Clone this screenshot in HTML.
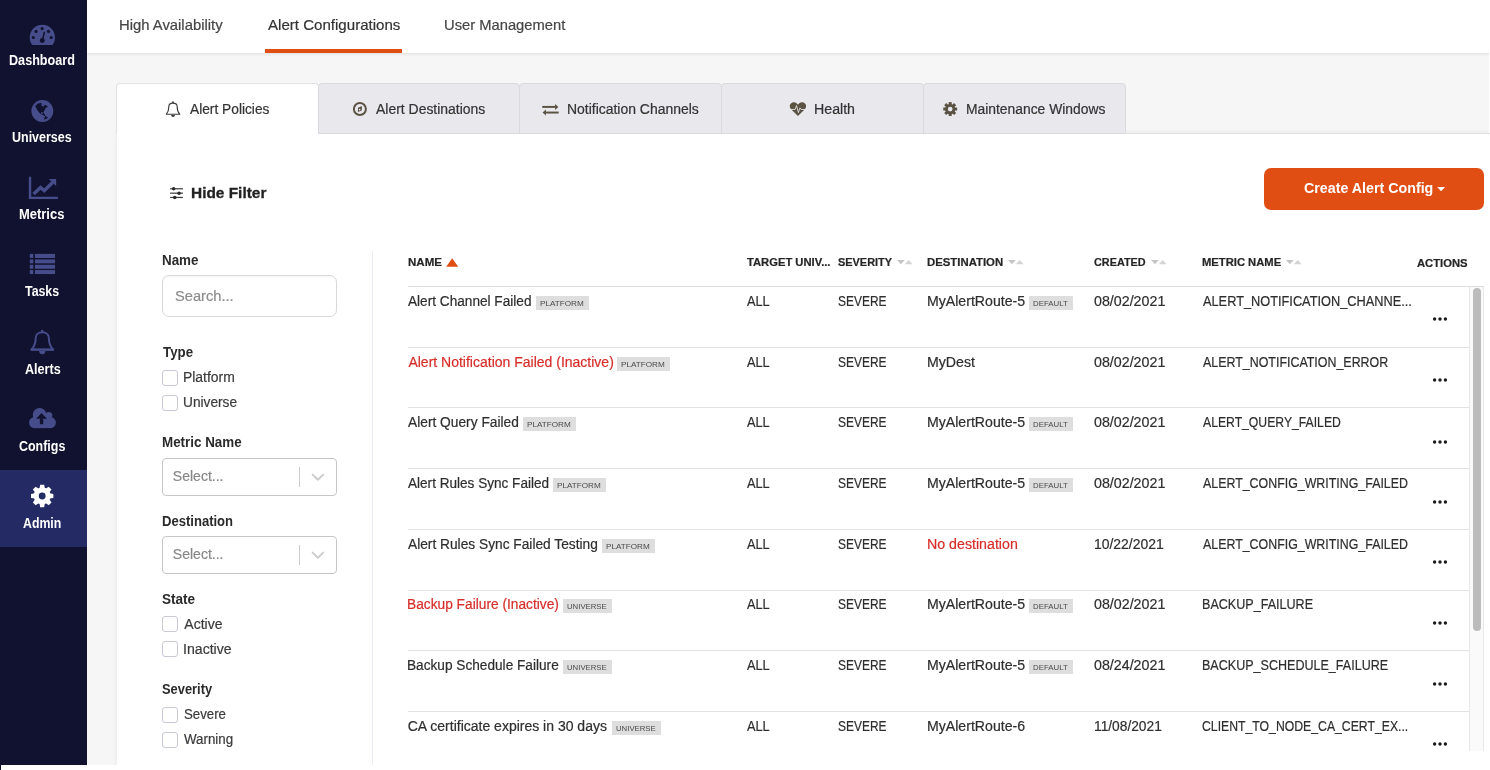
<!DOCTYPE html>
<html><head><meta charset="utf-8"><title>Alert Configurations</title>
<style>
html,body{margin:0;padding:0}
body{width:1490px;height:770px;overflow:hidden;position:relative;background:#f6f6f6;font-family:"Liberation Sans", sans-serif}
.a{position:absolute;display:block}
.t{position:absolute;white-space:pre;transform-origin:0 0;display:block}
.r{-webkit-text-stroke:0.2px currentColor}
</style></head><body>
<div class=a style="left:87px;top:0;width:1403px;height:53px;background:#fff;box-shadow:0 1px 3px rgba(0,0,0,.10)"></div>
<div class=a style="left:265px;top:49px;width:137px;height:4px;background:#e04e14"></div>
<div class=a style="left:117px;top:133px;width:1373px;height:632px;background:#fff;border-top:1px solid #e2e2e6;box-sizing:border-box;box-shadow:0 0 5px rgba(0,0,0,.07)"></div>
<div class=a style='left:116px;top:83px;width:203px;height:51px;background:#fff;border:1px solid #e2e2e6;border-bottom:none;border-radius:4px 4px 0 0;box-sizing:border-box'></div><div class=a style='left:318px;top:83px;width:202px;height:51px;background:#e8e8ed;border:1px solid #dadade;border-radius:4px 4px 0 0;box-sizing:border-box'></div><div class=a style='left:519px;top:83px;width:203px;height:51px;background:#e8e8ed;border:1px solid #dadade;border-radius:4px 4px 0 0;box-sizing:border-box'></div><div class=a style='left:721px;top:83px;width:203px;height:51px;background:#e8e8ed;border:1px solid #dadade;border-radius:4px 4px 0 0;box-sizing:border-box'></div><div class=a style='left:923px;top:83px;width:203px;height:51px;background:#e8e8ed;border:1px solid #dadade;border-radius:4px 4px 0 0;box-sizing:border-box'></div>
<div class=a style="left:1264px;top:168px;width:220px;height:42px;background:#e04e14;border-radius:7px"></div>
<svg class=a style="left:1437px;top:186.8px" width="9" height="5" viewBox="0 0 9 5"><polygon points="0.2,0 8,0 4.1,4.2" fill="#fff"/></svg>
<div class=a style="left:0;top:0;width:87px;height:770px;background:#11122f"></div>
<div class=a style="left:0;top:470px;width:87px;height:77px;background:#242a63"></div>
<div class=a style='left:162px;top:370px;width:14px;height:14px;border:1px solid #c9c9d6;border-radius:3px;background:#fff'></div>
<div class=a style='left:162px;top:395px;width:14px;height:14px;border:1px solid #c9c9d6;border-radius:3px;background:#fff'></div>
<div class=a style='left:162px;top:616px;width:14px;height:14px;border:1px solid #c9c9d6;border-radius:3px;background:#fff'></div>
<div class=a style='left:162px;top:641px;width:14px;height:14px;border:1px solid #c9c9d6;border-radius:3px;background:#fff'></div>
<div class=a style='left:162px;top:707px;width:14px;height:14px;border:1px solid #c9c9d6;border-radius:3px;background:#fff'></div>
<div class=a style='left:162px;top:732px;width:14px;height:14px;border:1px solid #c9c9d6;border-radius:3px;background:#fff'></div>
<div class=a style='left:162px;top:275px;width:173px;height:40px;border:1px solid #d9d9d9;border-radius:7px;background:#fff;box-shadow:inset 0 1px 1px rgba(0,0,0,.04)'></div>
<div class=a style='left:162px;top:458px;width:173px;height:36px;border:1px solid #c6c6c6;border-radius:4px;background:#fff'></div>
<div class=a style='left:299px;top:467px;width:1px;height:20px;background:#ccc'></div>
<svg class=a style='left:310px;top:472px' width='16' height='10' viewBox='0 0 16 10'><polyline points='2.6,2.6 7.9,7.8 13.2,2.6' fill='none' stroke='#ccc' stroke-width='1.9' stroke-linecap='round' stroke-linejoin='round'/></svg>
<div class=a style='left:162px;top:536px;width:173px;height:36px;border:1px solid #c6c6c6;border-radius:4px;background:#fff'></div>
<div class=a style='left:299px;top:545px;width:1px;height:20px;background:#ccc'></div>
<svg class=a style='left:310px;top:550px' width='16' height='10' viewBox='0 0 16 10'><polyline points='2.6,2.6 7.9,7.8 13.2,2.6' fill='none' stroke='#ccc' stroke-width='1.9' stroke-linecap='round' stroke-linejoin='round'/></svg>
<div class=a style='left:372px;top:251px;width:1px;height:514px;background:#e8ebef'></div>
<div class=a style='left:408px;top:286px;width:1076px;height:1px;background:#dddde1'></div>
<div class=a style='left:408px;top:347px;width:1061px;height:1px;background:#e3e3e6'></div>
<div class=a style='left:408px;top:407px;width:1061px;height:1px;background:#e3e3e6'></div>
<div class=a style='left:408px;top:468px;width:1061px;height:1px;background:#e3e3e6'></div>
<div class=a style='left:408px;top:529px;width:1061px;height:1px;background:#e3e3e6'></div>
<div class=a style='left:408px;top:590px;width:1061px;height:1px;background:#e3e3e6'></div>
<div class=a style='left:408px;top:650px;width:1061px;height:1px;background:#e3e3e6'></div>
<div class=a style='left:408px;top:711px;width:1061px;height:1px;background:#e3e3e6'></div>
<svg class=a style='left:445.8px;top:258px' width='13' height='9' viewBox='0 0 13 9'><polygon points='0.2,8.7 6.2,0.3 12.2,8.7' fill='#e04e14'/></svg>
<svg class=a style='left:897.4px;top:260px' width='16' height='5' viewBox='0 0 16 5'><polygon points='0,0 7.8,0 3.9,4.2' fill='#c4c4c4'/><polygon points='7.8,4.2 15.6,4.2 11.7,0' fill='#d4d4d4'/></svg>
<svg class=a style='left:1008.0px;top:260px' width='16' height='5' viewBox='0 0 16 5'><polygon points='0,0 7.8,0 3.9,4.2' fill='#c4c4c4'/><polygon points='7.8,4.2 15.6,4.2 11.7,0' fill='#d4d4d4'/></svg>
<svg class=a style='left:1151.0px;top:260px' width='16' height='5' viewBox='0 0 16 5'><polygon points='0,0 7.8,0 3.9,4.2' fill='#c4c4c4'/><polygon points='7.8,4.2 15.6,4.2 11.7,0' fill='#d4d4d4'/></svg>
<svg class=a style='left:1286.1px;top:260px' width='16' height='5' viewBox='0 0 16 5'><polygon points='0,0 7.8,0 3.9,4.2' fill='#c4c4c4'/><polygon points='7.8,4.2 15.6,4.2 11.7,0' fill='#d4d4d4'/></svg>
<div class=a style='left:535.7px;top:296px;width:53.0px;height:14px;background:#dedede'></div>
<div class=a style='left:1029.0px;top:296px;width:43.8px;height:14px;background:#dedede'></div>
<div class=a style='left:616.9px;top:357px;width:53.0px;height:14px;background:#dedede'></div>
<div class=a style='left:522.7px;top:417px;width:53.0px;height:14px;background:#dedede'></div>
<div class=a style='left:1029.0px;top:417px;width:43.8px;height:14px;background:#dedede'></div>
<div class=a style='left:552.9px;top:478px;width:53.0px;height:14px;background:#dedede'></div>
<div class=a style='left:1029.0px;top:478px;width:43.8px;height:14px;background:#dedede'></div>
<div class=a style='left:601.7px;top:539px;width:53.0px;height:14px;background:#dedede'></div>
<div class=a style='left:562.9px;top:599px;width:49.0px;height:14px;background:#dedede'></div>
<div class=a style='left:1029.0px;top:599px;width:43.8px;height:14px;background:#dedede'></div>
<div class=a style='left:562.9px;top:660px;width:49.0px;height:14px;background:#dedede'></div>
<div class=a style='left:1029.0px;top:660px;width:43.8px;height:14px;background:#dedede'></div>
<div class=a style='left:611.9px;top:721px;width:49.0px;height:14px;background:#dedede'></div>
<svg class=a style='left:1432px;top:316.4px' width='16' height='6' viewBox='0 0 16 6'><g fill='#1a1a1a'><circle cx='2.6' cy='3' r='1.7'/><circle cx='8.0' cy='3' r='1.7'/><circle cx='13.4' cy='3' r='1.7'/></g></svg>
<svg class=a style='left:1432px;top:377.2px' width='16' height='6' viewBox='0 0 16 6'><g fill='#1a1a1a'><circle cx='2.6' cy='3' r='1.7'/><circle cx='8.0' cy='3' r='1.7'/><circle cx='13.4' cy='3' r='1.7'/></g></svg>
<svg class=a style='left:1432px;top:438.6px' width='16' height='6' viewBox='0 0 16 6'><g fill='#1a1a1a'><circle cx='2.6' cy='3' r='1.7'/><circle cx='8.0' cy='3' r='1.7'/><circle cx='13.4' cy='3' r='1.7'/></g></svg>
<svg class=a style='left:1432px;top:499.4px' width='16' height='6' viewBox='0 0 16 6'><g fill='#1a1a1a'><circle cx='2.6' cy='3' r='1.7'/><circle cx='8.0' cy='3' r='1.7'/><circle cx='13.4' cy='3' r='1.7'/></g></svg>
<svg class=a style='left:1432px;top:559.2px' width='16' height='6' viewBox='0 0 16 6'><g fill='#1a1a1a'><circle cx='2.6' cy='3' r='1.7'/><circle cx='8.0' cy='3' r='1.7'/><circle cx='13.4' cy='3' r='1.7'/></g></svg>
<svg class=a style='left:1432px;top:620.2px' width='16' height='6' viewBox='0 0 16 6'><g fill='#1a1a1a'><circle cx='2.6' cy='3' r='1.7'/><circle cx='8.0' cy='3' r='1.7'/><circle cx='13.4' cy='3' r='1.7'/></g></svg>
<svg class=a style='left:1432px;top:681.3px' width='16' height='6' viewBox='0 0 16 6'><g fill='#1a1a1a'><circle cx='2.6' cy='3' r='1.7'/><circle cx='8.0' cy='3' r='1.7'/><circle cx='13.4' cy='3' r='1.7'/></g></svg>
<svg class=a style='left:1432px;top:741.3px' width='16' height='6' viewBox='0 0 16 6'><g fill='#1a1a1a'><circle cx='2.6' cy='3' r='1.7'/><circle cx='8.0' cy='3' r='1.7'/><circle cx='13.4' cy='3' r='1.7'/></g></svg>
<div class=a style='left:1469px;top:287px;width:15px;height:464px;background:#fafafa;border-left:1px solid #e8e8e8;border-right:1px solid #e8e8e8;box-sizing:border-box'></div>
<div class=a style='left:1473px;top:288px;width:8px;height:343px;background:#bcbcbc;border-radius:4px'></div>
<svg class=a style='left:22px;top:20px' width='40' height='30' viewBox='0 0 1027 770'>
<path d='M262.5 641 A324 324 0 1 1 781.5 641 Z' fill='#464d8a'/>
<g fill='#11122f'><circle cx='290' cy='450' r='40'/><circle cx='360' cy='292' r='40'/><circle cx='518' cy='220' r='40'/><circle cx='680' cy='292' r='40'/><circle cx='750' cy='450' r='40'/><circle cx='520' cy='527' r='63'/></g>
<line x1='520' y1='525' x2='573' y2='322' stroke='#11122f' stroke-width='38' stroke-linecap='round'/></svg>
<svg class=a style='left:22px;top:95px' width='40' height='30' viewBox='0 0 1027 770'>
<circle cx='522' cy='410' r='281' fill='#464d8a'/>
<g fill='#11122f'><path d='M335 292 L395 222 L495 200 L505 235 L492 262 L545 300 L592 250 L668 296 L603 342 L572 402 L545 440 L560 470 L600 520 L585 545 L540 515 L470 480 L420 425 L380 365 L362 318 Z'/>
<path d='M598 540 L672 576 L615 618 L568 634 L580 575 Z'/></g>
<circle cx='535' cy='255' r='22' fill='#464d8a'/><circle cx='510' cy='462' r='24' fill='#464d8a'/></svg>
<svg class=a style='left:22px;top:172px' width='40' height='30' viewBox='0 0 1027 770'>
<path d='M175 125 h62 v512 h685 v55 H175 Z' fill='#464d8a'/>
<polyline points='298,565 475,398 572,478 790,262' fill='none' stroke='#464d8a' stroke-width='88' stroke-linejoin='miter'/>
<polygon points='688,180 876,180 876,358' fill='#464d8a'/></svg>
<svg class=a style='left:22px;top:250px' width='40' height='30' viewBox='0 0 1027 770'><g fill='#464d8a'><rect x='200' y='100' width='90' height='105'/><rect x='332' y='100' width='516' height='105'/><rect x='200' y='242' width='90' height='100'/><rect x='332' y='242' width='516' height='100'/><rect x='200' y='380' width='90' height='102'/><rect x='332' y='380' width='516' height='102'/><rect x='200' y='515' width='90' height='102'/><rect x='332' y='515' width='516' height='102'/></g></svg>
<svg class=a style='left:22px;top:325px' width='40' height='30' viewBox='0 0 1027 770'>
<circle cx='520' cy='152' r='33' fill='#464d8a'/>
<path d='M240 632 C330 545 352 440 352 335 C352 235 430 188 520 188 C610 188 690 235 690 335 C690 440 712 545 802 632 Z' fill='none' stroke='#464d8a' stroke-width='50' stroke-linejoin='round'/>
<rect x='222' y='606' width='598' height='56' rx='22' fill='#464d8a'/><path d='M438 668 A84 100 0 0 0 604 668 Z' fill='#464d8a'/></svg>
<svg class=a style='left:22px;top:400px' width='40' height='30' viewBox='0 0 1027 770'>
<g fill='#464d8a'><circle cx='322' cy='580' r='142'/><circle cx='728' cy='580' r='142'/><rect x='322' y='440' width='406' height='282'/>
<circle cx='452' cy='382' r='176'/><circle cx='688' cy='398' r='90'/><rect x='450' y='400' width='300' height='100'/></g>
<g fill='#11122f'><polygon points='500,333 642,481 362,481'/><rect x='459' y='475' width='86' height='146'/></g></svg>
<svg class=a style='left:22px;top:480px' width='40' height='30' viewBox='0 0 1027 770'>
<g transform='translate(518 410)' fill='#fff'><polygon points='-68,-190 -52,-287 52,-287 68,-190' transform='rotate(0)'/><polygon points='-68,-190 -52,-287 52,-287 68,-190' transform='rotate(45)'/><polygon points='-68,-190 -52,-287 52,-287 68,-190' transform='rotate(90)'/><polygon points='-68,-190 -52,-287 52,-287 68,-190' transform='rotate(135)'/><polygon points='-68,-190 -52,-287 52,-287 68,-190' transform='rotate(180)'/><polygon points='-68,-190 -52,-287 52,-287 68,-190' transform='rotate(225)'/><polygon points='-68,-190 -52,-287 52,-287 68,-190' transform='rotate(270)'/><polygon points='-68,-190 -52,-287 52,-287 68,-190' transform='rotate(315)'/><circle r='218'/></g><circle cx='518' cy='410' r='88' fill='#242a63'/></svg>
<svg class=a style='left:160px;top:96px' width='40' height='26' viewBox='0 0 1185 770'>
<circle cx='385' cy='182' r='27' fill='#3a3a3a'/>
<path d='M188 540 C250 470 262 390 262 312 C262 240 320 212 385 212 C450 212 508 240 508 312 C508 390 520 470 585 540 Z' fill='none' stroke='#3a3a3a' stroke-width='34' stroke-linejoin='round'/>
<path d='M330 562 A56 58 0 0 0 442 562 Z' fill='#3a3a3a'/></svg>
<svg class=a style='left:345px;top:96px' width='40' height='26' viewBox='0 0 1185 770'>
<circle cx='441' cy='385' r='178' fill='none' stroke='#5a5242' stroke-width='58'/>
<polygon points='502,298 496,432 380,472 386,345' fill='#5a5242'/><circle cx='432' cy='405' r='24' fill='#e8e8ed'/></svg>
<svg class=a style='left:535px;top:96px' width='40' height='26' viewBox='0 0 1185 770'>
<g fill='#5a5242'><rect x='215' y='294' width='400' height='58'/><polygon points='595,234 692,323 595,412'/>
<rect x='305' y='461' width='395' height='58'/><polygon points='322,400 225,490 322,580'/></g></svg>
<svg class=a style='left:780px;top:96px' width='40' height='26' viewBox='0 0 1185 770'>
<path d='M532 592 L322 382 C262 312 290 196 402 184 C470 180 518 226 532 262 C546 226 594 180 662 184 C774 196 802 312 742 382 Z' fill='#5a5242'/>
<polyline points='300,398 448,398 490,285 545,490 592,352 622,398 770,398' fill='none' stroke='#e8e8ed' stroke-width='25' stroke-linejoin='miter'/></svg>
<svg class=a style='left:935px;top:96px' width='40' height='26' viewBox='0 0 1185 770'>
<g transform='translate(450 386)' fill='#5a5242'><rect x='-44' y='-206' width='88' height='90' transform='rotate(0)'/><rect x='-44' y='-206' width='88' height='90' transform='rotate(45)'/><rect x='-44' y='-206' width='88' height='90' transform='rotate(90)'/><rect x='-44' y='-206' width='88' height='90' transform='rotate(135)'/><rect x='-44' y='-206' width='88' height='90' transform='rotate(180)'/><rect x='-44' y='-206' width='88' height='90' transform='rotate(225)'/><rect x='-44' y='-206' width='88' height='90' transform='rotate(270)'/><rect x='-44' y='-206' width='88' height='90' transform='rotate(315)'/><circle r='152'/></g><circle cx='450' cy='386' r='70' fill='#e8e8ed'/></svg>
<svg class=a style='left:162px;top:180px' width='40' height='26' viewBox='0 0 1185 770'>
<g stroke='#3c3c3c' stroke-width='36'><line x1='240' y1='260' x2='620' y2='260'/><line x1='240' y1='390' x2='620' y2='390'/><line x1='240' y1='517' x2='620' y2='517'/></g>
<g fill='#2a2a2a'><circle cx='345' cy='260' r='52'/><circle cx='505' cy='390' r='52'/><circle cx='378' cy='517' r='52'/></g></svg>
<div class=a style="left:0;top:0;width:1490px;height:770px;will-change:transform">
<span class=t style='left:9.26px;top:50px;font-size:14px;line-height:20px;font-weight:700;color:#fff;transform:scaleX(0.9011);'>Dashboard</span>
<span class=t style='left:12.31px;top:127px;font-size:14px;line-height:20px;font-weight:700;color:#fff;transform:scaleX(0.8918);'>Universes</span>
<span class=t style='left:19.39px;top:204px;font-size:14px;line-height:20px;font-weight:700;color:#fff;transform:scaleX(0.9248);'>Metrics</span>
<span class=t style='left:25.40px;top:281px;font-size:14px;line-height:20px;font-weight:700;color:#fff;transform:scaleX(0.8821);'>Tasks</span>
<span class=t style='left:24.50px;top:359px;font-size:14px;line-height:20px;font-weight:700;color:#fff;transform:scaleX(0.8998);'>Alerts</span>
<span class=t style='left:19.11px;top:436px;font-size:14px;line-height:20px;font-weight:700;color:#fff;transform:scaleX(0.8885);'>Configs</span>
<span class=t style='left:23.26px;top:513px;font-size:14px;line-height:20px;font-weight:700;color:#fff;transform:scaleX(0.8791);'>Admin</span>
<span class='t r' style='left:118.84px;top:15px;font-size:14.5px;line-height:20px;font-weight:400;color:#454545;transform:scaleX(1.0222);'>High Availability</span>
<span class='t r' style='left:267.80px;top:15px;font-size:14.5px;line-height:20px;font-weight:400;color:#333;transform:scaleX(1.0395);'>Alert Configurations</span>
<span class='t r' style='left:444.08px;top:15px;font-size:14.5px;line-height:20px;font-weight:400;color:#454545;transform:scaleX(1.0167);'>User Management</span>
<span class='t r' style='left:190.10px;top:99px;font-size:14px;line-height:20px;font-weight:400;color:#333;transform:scaleX(0.9816);'>Alert Policies</span>
<span class='t r' style='left:375.70px;top:99px;font-size:14px;line-height:20px;font-weight:400;color:#333;transform:scaleX(0.9965);'>Alert Destinations</span>
<span class='t r' style='left:566.91px;top:99px;font-size:14px;line-height:20px;font-weight:400;color:#333;transform:scaleX(0.9957);'>Notification Channels</span>
<span class='t r' style='left:814.29px;top:99px;font-size:14px;line-height:20px;font-weight:400;color:#333;transform:scaleX(1.0132);'>Health</span>
<span class='t r' style='left:965.72px;top:99px;font-size:14px;line-height:20px;font-weight:400;color:#333;transform:scaleX(0.9891);'>Maintenance Windows</span>
<span class=t style='left:190.94px;top:182px;font-size:15.5px;line-height:21px;font-weight:700;color:#222;transform:scaleX(0.9946);-webkit-text-stroke:0.3px #222;'>Hide Filter</span>
<span class=t style='left:1303.55px;top:178px;font-size:14.5px;line-height:20px;font-weight:700;color:#fff;transform:scaleX(0.9828);'>Create Alert Config</span>
<span class=t style='left:161.66px;top:250px;font-size:14px;line-height:20px;font-weight:700;color:#2a2a2a;transform:scaleX(0.9565);'>Name</span>
<span class='t r' style='left:175.24px;top:286px;font-size:14.5px;line-height:20px;font-weight:400;color:#8c8c8c;transform:scaleX(1.0095);'>Search...</span>
<span class=t style='left:162.50px;top:342px;font-size:14px;line-height:20px;font-weight:700;color:#2a2a2a;transform:scaleX(0.9492);'>Type</span>
<span class='t r' style='left:183.21px;top:367px;font-size:14px;line-height:20px;font-weight:400;color:#3a3a3a;transform:scaleX(0.9939);'>Platform</span>
<span class='t r' style='left:183.44px;top:392px;font-size:14px;line-height:20px;font-weight:400;color:#3a3a3a;transform:scaleX(0.9777);'>Universe</span>
<span class=t style='left:161.66px;top:432px;font-size:14px;line-height:20px;font-weight:700;color:#2a2a2a;transform:scaleX(0.9570);'>Metric Name</span>
<span class='t r' style='left:172.86px;top:466px;font-size:14px;line-height:20px;font-weight:400;color:#888;'>Select...</span>
<span class=t style='left:161.68px;top:511px;font-size:14px;line-height:20px;font-weight:700;color:#2a2a2a;transform:scaleX(0.9320);'>Destination</span>
<span class='t r' style='left:172.86px;top:544px;font-size:14px;line-height:20px;font-weight:400;color:#888;'>Select...</span>
<span class=t style='left:162.29px;top:589px;font-size:14px;line-height:20px;font-weight:700;color:#2a2a2a;transform:scaleX(0.9683);'>State</span>
<span class='t r' style='left:184.30px;top:614px;font-size:14px;line-height:20px;font-weight:400;color:#3a3a3a;'>Active</span>
<span class='t r' style='left:183.20px;top:639px;font-size:14px;line-height:20px;font-weight:400;color:#3a3a3a;transform:scaleX(1.0089);'>Inactive</span>
<span class=t style='left:162.30px;top:679px;font-size:14px;line-height:20px;font-weight:700;color:#2a2a2a;transform:scaleX(0.9199);'>Severity</span>
<span class='t r' style='left:183.89px;top:704px;font-size:14px;line-height:20px;font-weight:400;color:#3a3a3a;transform:scaleX(0.9457);'>Severe</span>
<span class='t r' style='left:184.30px;top:729px;font-size:14px;line-height:20px;font-weight:400;color:#3a3a3a;transform:scaleX(0.9523);'>Warning</span>
<span class='t r' style='left:407.77px;top:254px;font-size:11px;line-height:16px;font-weight:700;color:#262626;transform:scaleX(1.0479);'>NAME</span>
<span class='t r' style='left:747.00px;top:254px;font-size:11px;line-height:16px;font-weight:700;color:#262626;transform:scaleX(1.0192);'>TARGET UNIV...</span>
<span class='t r' style='left:838.10px;top:254px;font-size:11px;line-height:16px;font-weight:700;color:#262626;transform:scaleX(0.9932);'>SEVERITY</span>
<span class='t r' style='left:927.08px;top:254px;font-size:11px;line-height:16px;font-weight:700;color:#262626;transform:scaleX(1.0325);'>DESTINATION</span>
<span class='t r' style='left:1094.26px;top:254px;font-size:11px;line-height:16px;font-weight:700;color:#262626;transform:scaleX(0.9853);'>CREATED</span>
<span class='t r' style='left:1201.99px;top:254px;font-size:11px;line-height:16px;font-weight:700;color:#262626;transform:scaleX(1.0193);'>METRIC NAME</span>
<span class='t r' style='left:1416.94px;top:255px;font-size:11px;line-height:16px;font-weight:700;color:#262626;transform:scaleX(1.0212);'>ACTIONS</span>
<span class='t r' style='left:408.40px;top:291px;font-size:14px;line-height:20px;font-weight:400;color:#2e2e2e;transform:scaleX(0.9733);'>Alert Channel Failed</span>
<span class='t r' style='left:747.10px;top:291px;font-size:14px;line-height:20px;font-weight:400;color:#2e2e2e;transform:scaleX(0.9120);'>ALL</span>
<span class='t r' style='left:838.03px;top:291px;font-size:14px;line-height:20px;font-weight:400;color:#2e2e2e;transform:scaleX(0.8534);'>SEVERE</span>
<span class='t r' style='left:926.90px;top:291px;font-size:14px;line-height:20px;font-weight:400;color:#2e2e2e;transform:scaleX(1.0084);'>MyAlertRoute-5</span>
<span class='t r' style='left:1094.25px;top:291px;font-size:14px;line-height:20px;font-weight:400;color:#2e2e2e;transform:scaleX(1.0179);'>08/02/2021</span>
<span class='t r' style='left:1202.90px;top:291px;font-size:14px;line-height:20px;font-weight:400;color:#2e2e2e;transform:scaleX(0.9122);'>ALERT_NOTIFICATION_CHANNE...</span>
<span class='t r' style='left:408.40px;top:352px;font-size:14px;line-height:20px;font-weight:400;color:#d62e2a;'>Alert Notification Failed (Inactive)</span>
<span class='t r' style='left:747.10px;top:352px;font-size:14px;line-height:20px;font-weight:400;color:#2e2e2e;transform:scaleX(0.9120);'>ALL</span>
<span class='t r' style='left:838.03px;top:352px;font-size:14px;line-height:20px;font-weight:400;color:#2e2e2e;transform:scaleX(0.8534);'>SEVERE</span>
<span class='t r' style='left:926.89px;top:352px;font-size:14px;line-height:20px;font-weight:400;color:#2e2e2e;transform:scaleX(1.0107);'>MyDest</span>
<span class='t r' style='left:1094.25px;top:352px;font-size:14px;line-height:20px;font-weight:400;color:#2e2e2e;transform:scaleX(1.0179);'>08/02/2021</span>
<span class='t r' style='left:1202.90px;top:352px;font-size:14px;line-height:20px;font-weight:400;color:#2e2e2e;transform:scaleX(0.8874);'>ALERT_NOTIFICATION_ERROR</span>
<span class='t r' style='left:408.40px;top:412px;font-size:14px;line-height:20px;font-weight:400;color:#2e2e2e;transform:scaleX(0.9827);'>Alert Query Failed</span>
<span class='t r' style='left:747.10px;top:412px;font-size:14px;line-height:20px;font-weight:400;color:#2e2e2e;transform:scaleX(0.9120);'>ALL</span>
<span class='t r' style='left:838.03px;top:412px;font-size:14px;line-height:20px;font-weight:400;color:#2e2e2e;transform:scaleX(0.8534);'>SEVERE</span>
<span class='t r' style='left:926.90px;top:412px;font-size:14px;line-height:20px;font-weight:400;color:#2e2e2e;transform:scaleX(1.0084);'>MyAlertRoute-5</span>
<span class='t r' style='left:1094.25px;top:412px;font-size:14px;line-height:20px;font-weight:400;color:#2e2e2e;transform:scaleX(1.0179);'>08/02/2021</span>
<span class='t r' style='left:1202.90px;top:412px;font-size:14px;line-height:20px;font-weight:400;color:#2e2e2e;transform:scaleX(0.8711);'>ALERT_QUERY_FAILED</span>
<span class='t r' style='left:408.40px;top:473px;font-size:14px;line-height:20px;font-weight:400;color:#2e2e2e;transform:scaleX(0.9695);'>Alert Rules Sync Failed</span>
<span class='t r' style='left:747.10px;top:473px;font-size:14px;line-height:20px;font-weight:400;color:#2e2e2e;transform:scaleX(0.9120);'>ALL</span>
<span class='t r' style='left:838.03px;top:473px;font-size:14px;line-height:20px;font-weight:400;color:#2e2e2e;transform:scaleX(0.8534);'>SEVERE</span>
<span class='t r' style='left:926.90px;top:473px;font-size:14px;line-height:20px;font-weight:400;color:#2e2e2e;transform:scaleX(1.0084);'>MyAlertRoute-5</span>
<span class='t r' style='left:1094.25px;top:473px;font-size:14px;line-height:20px;font-weight:400;color:#2e2e2e;transform:scaleX(1.0179);'>08/02/2021</span>
<span class='t r' style='left:1202.90px;top:473px;font-size:14px;line-height:20px;font-weight:400;color:#2e2e2e;transform:scaleX(0.8850);'>ALERT_CONFIG_WRITING_FAILED</span>
<span class='t r' style='left:408.40px;top:534px;font-size:14px;line-height:20px;font-weight:400;color:#2e2e2e;transform:scaleX(0.9810);'>Alert Rules Sync Failed Testing</span>
<span class='t r' style='left:747.10px;top:534px;font-size:14px;line-height:20px;font-weight:400;color:#2e2e2e;transform:scaleX(0.9120);'>ALL</span>
<span class='t r' style='left:838.03px;top:534px;font-size:14px;line-height:20px;font-weight:400;color:#2e2e2e;transform:scaleX(0.8534);'>SEVERE</span>
<span class='t r' style='left:926.89px;top:534px;font-size:14px;line-height:20px;font-weight:400;color:#d62e2a;transform:scaleX(1.0146);'>No destination</span>
<span class='t r' style='left:1094.43px;top:534px;font-size:14px;line-height:20px;font-weight:400;color:#2e2e2e;transform:scaleX(0.9952);'>10/22/2021</span>
<span class='t r' style='left:1202.90px;top:534px;font-size:14px;line-height:20px;font-weight:400;color:#2e2e2e;transform:scaleX(0.8850);'>ALERT_CONFIG_WRITING_FAILED</span>
<span class='t r' style='left:407.33px;top:594px;font-size:14px;line-height:20px;font-weight:400;color:#d62e2a;transform:scaleX(0.9809);'>Backup Failure (Inactive)</span>
<span class='t r' style='left:747.10px;top:594px;font-size:14px;line-height:20px;font-weight:400;color:#2e2e2e;transform:scaleX(0.9120);'>ALL</span>
<span class='t r' style='left:838.03px;top:594px;font-size:14px;line-height:20px;font-weight:400;color:#2e2e2e;transform:scaleX(0.8534);'>SEVERE</span>
<span class='t r' style='left:926.90px;top:594px;font-size:14px;line-height:20px;font-weight:400;color:#2e2e2e;transform:scaleX(1.0084);'>MyAlertRoute-5</span>
<span class='t r' style='left:1094.25px;top:594px;font-size:14px;line-height:20px;font-weight:400;color:#2e2e2e;transform:scaleX(1.0179);'>08/02/2021</span>
<span class='t r' style='left:1201.92px;top:594px;font-size:14px;line-height:20px;font-weight:400;color:#2e2e2e;transform:scaleX(0.8973);'>BACKUP_FAILURE</span>
<span class='t r' style='left:407.33px;top:655px;font-size:14px;line-height:20px;font-weight:400;color:#2e2e2e;transform:scaleX(0.9748);'>Backup Schedule Failure</span>
<span class='t r' style='left:747.10px;top:655px;font-size:14px;line-height:20px;font-weight:400;color:#2e2e2e;transform:scaleX(0.9120);'>ALL</span>
<span class='t r' style='left:838.03px;top:655px;font-size:14px;line-height:20px;font-weight:400;color:#2e2e2e;transform:scaleX(0.8534);'>SEVERE</span>
<span class='t r' style='left:926.90px;top:655px;font-size:14px;line-height:20px;font-weight:400;color:#2e2e2e;transform:scaleX(1.0084);'>MyAlertRoute-5</span>
<span class='t r' style='left:1094.25px;top:655px;font-size:14px;line-height:20px;font-weight:400;color:#2e2e2e;transform:scaleX(1.0179);'>08/24/2021</span>
<span class='t r' style='left:1201.92px;top:655px;font-size:14px;line-height:20px;font-weight:400;color:#2e2e2e;transform:scaleX(0.8959);'>BACKUP_SCHEDULE_FAILURE</span>
<span class='t r' style='left:407.74px;top:716px;font-size:14px;line-height:20px;font-weight:400;color:#2e2e2e;'>CA certificate expires in 30 days</span>
<span class='t r' style='left:747.10px;top:716px;font-size:14px;line-height:20px;font-weight:400;color:#2e2e2e;transform:scaleX(0.9120);'>ALL</span>
<span class='t r' style='left:838.03px;top:716px;font-size:14px;line-height:20px;font-weight:400;color:#2e2e2e;transform:scaleX(0.8534);'>SEVERE</span>
<span class='t r' style='left:926.90px;top:716px;font-size:14px;line-height:20px;font-weight:400;color:#2e2e2e;transform:scaleX(1.0084);'>MyAlertRoute-6</span>
<span class='t r' style='left:1094.44px;top:716px;font-size:14px;line-height:20px;font-weight:400;color:#2e2e2e;transform:scaleX(0.9824);'>11/08/2021</span>
<span class='t r' style='left:1202.33px;top:716px;font-size:14px;line-height:20px;font-weight:400;color:#2e2e2e;transform:scaleX(0.8740);'>CLIENT_TO_NODE_CA_CERT_EX...</span>
<span class=t style='left:540.29px;top:297px;font-size:8px;line-height:13px;font-weight:400;color:#4a4a4a;transform:scaleX(1.0192);'>PLATFORM</span>
<span class=t style='left:1033.26px;top:297px;font-size:8px;line-height:13px;font-weight:400;color:#4a4a4a;transform:scaleX(0.9819);'>DEFAULT</span>
<span class=t style='left:621.49px;top:358px;font-size:8px;line-height:13px;font-weight:400;color:#4a4a4a;transform:scaleX(1.0192);'>PLATFORM</span>
<span class=t style='left:527.29px;top:418px;font-size:8px;line-height:13px;font-weight:400;color:#4a4a4a;transform:scaleX(1.0192);'>PLATFORM</span>
<span class=t style='left:1033.26px;top:418px;font-size:8px;line-height:13px;font-weight:400;color:#4a4a4a;transform:scaleX(0.9819);'>DEFAULT</span>
<span class=t style='left:557.49px;top:479px;font-size:8px;line-height:13px;font-weight:400;color:#4a4a4a;transform:scaleX(1.0192);'>PLATFORM</span>
<span class=t style='left:1033.26px;top:479px;font-size:8px;line-height:13px;font-weight:400;color:#4a4a4a;transform:scaleX(0.9819);'>DEFAULT</span>
<span class=t style='left:606.29px;top:540px;font-size:8px;line-height:13px;font-weight:400;color:#4a4a4a;transform:scaleX(1.0192);'>PLATFORM</span>
<span class=t style='left:567.42px;top:600px;font-size:8px;line-height:13px;font-weight:400;color:#4a4a4a;transform:scaleX(0.9709);'>UNIVERSE</span>
<span class=t style='left:1033.26px;top:600px;font-size:8px;line-height:13px;font-weight:400;color:#4a4a4a;transform:scaleX(0.9819);'>DEFAULT</span>
<span class=t style='left:567.42px;top:661px;font-size:8px;line-height:13px;font-weight:400;color:#4a4a4a;transform:scaleX(0.9709);'>UNIVERSE</span>
<span class=t style='left:1033.26px;top:661px;font-size:8px;line-height:13px;font-weight:400;color:#4a4a4a;transform:scaleX(0.9819);'>DEFAULT</span>
<span class=t style='left:616.42px;top:722px;font-size:8px;line-height:13px;font-weight:400;color:#4a4a4a;transform:scaleX(0.9709);'>UNIVERSE</span>
</div>
<div class=a style="left:1489px;top:53px;width:1px;height:80px;background:#fff"></div>
<div class=a style="left:1px;top:765px;width:1489px;height:5px;background:#fff"></div>
</body></html>
